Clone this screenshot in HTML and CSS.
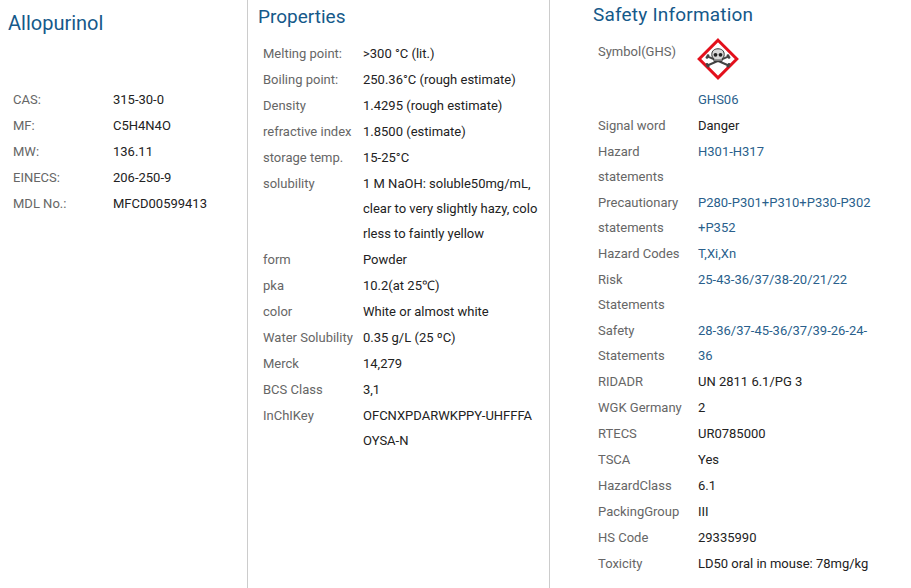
FILE: index.html
```html
<!DOCTYPE html>
<html lang="en">
<head>
<meta charset="utf-8">
<title>Allopurinol</title>
<link rel="stylesheet" href="styles.css">
</head>
<body>
<main class="page">
  <section class="col col-basic">
    <h1 class="title">Allopurinol</h1>
    <dl class="rows">
      <div class="row"><dt>CAS:</dt><dd>315-30-0</dd></div>
      <div class="row"><dt>MF:</dt><dd>C5H4N4O</dd></div>
      <div class="row"><dt>MW:</dt><dd>136.11</dd></div>
      <div class="row"><dt>EINECS:</dt><dd>206-250-9</dd></div>
      <div class="row"><dt>MDL No.:</dt><dd>MFCD00599413</dd></div>
    </dl>
  </section>
  <section class="col col-props">
    <h2 class="title">Properties</h2>
    <dl class="rows">
      <div class="row"><dt>Melting point:</dt><dd>&gt;300 °C (lit.)</dd></div>
      <div class="row"><dt>Boiling point:</dt><dd>250.36°C (rough estimate)</dd></div>
      <div class="row"><dt>Density</dt><dd>1.4295 (rough estimate)</dd></div>
      <div class="row"><dt>refractive index</dt><dd>1.8500 (estimate)</dd></div>
      <div class="row"><dt>storage temp.</dt><dd>15-25°C</dd></div>
      <div class="row"><dt>solubility</dt><dd>1 M NaOH: soluble50mg/mL, clear to very slightly hazy, colorless to faintly yellow</dd></div>
      <div class="row"><dt>form</dt><dd>Powder</dd></div>
      <div class="row"><dt>pka</dt><dd>10.2(at 25℃)</dd></div>
      <div class="row"><dt>color</dt><dd>White or almost white</dd></div>
      <div class="row"><dt>Water Solubility</dt><dd>0.35 g/L (25 ºC)</dd></div>
      <div class="row"><dt>Merck</dt><dd>14,279</dd></div>
      <div class="row"><dt>BCS Class</dt><dd>3,1</dd></div>
      <div class="row"><dt>InChIKey</dt><dd>OFCNXPDARWKPPY-UHFFFAOYSA-N</dd></div>
    </dl>
  </section>
  <section class="col col-safety">
    <h2 class="title">Safety Information</h2>
    <dl class="rows">
      <div class="row"><dt>Symbol(GHS)</dt><dd>
        <svg class="ghs" width="42" height="48" viewBox="0 0 42 48" aria-hidden="true">
          <path d="M21 2.200 L39.800 21 L21 39.800 L2.200 21 Z" fill="#fff" stroke="#e3101c" stroke-width="3" stroke-linejoin="miter"/>
          <path d="M11.500 18.800 L30.500 27 M30.500 18.800 L11.500 27" stroke="#444" stroke-width="2" stroke-linecap="round"/>
          <circle cx="11" cy="17.600" r="1.400" fill="#444"/>
          <circle cx="10" cy="19.400" r="1.400" fill="#444"/>
          <circle cx="31" cy="17.600" r="1.400" fill="#444"/>
          <circle cx="32" cy="19.400" r="1.400" fill="#444"/>
          <circle cx="11" cy="28.200" r="1.400" fill="#444"/>
          <circle cx="10" cy="26.400" r="1.400" fill="#444"/>
          <circle cx="31" cy="28.200" r="1.400" fill="#444"/>
          <circle cx="32" cy="26.400" r="1.400" fill="#444"/>
          <path d="M14.800 16.500 C14.800 12.600 17.500 10.800 21 10.800 C24.500 10.800 27.200 12.600 27.200 16.500 C27.200 18.800 26.200 20 25 20.700 L25 23.400 L17 23.400 L17 20.700 C15.800 20 14.800 18.800 14.800 16.500 Z" fill="#d8d8d8" stroke="#333" stroke-width="1"/>
          <circle cx="18.500" cy="16.800" r="1.900" fill="#222"/>
          <circle cx="23.500" cy="16.800" r="1.900" fill="#222"/>
          <path d="M19 23.200 V21.200 M21 23.200 V21.200 M23 23.200 V21.200" stroke="#222" stroke-width=".9"/>
        </svg>
        <a class="link" href="#">GHS06</a></dd></div>
      <div class="row"><dt>Signal word</dt><dd>Danger</dd></div>
      <div class="row"><dt>Hazard statements</dt><dd><a class="link" href="#">H301-H317</a></dd></div>
      <div class="row"><dt>Precautionary statements</dt><dd><a class="link" href="#">P280-P301+P310+P330-P302+P352</a></dd></div>
      <div class="row"><dt>Hazard Codes</dt><dd><a class="link" href="#">T,Xi,Xn</a></dd></div>
      <div class="row"><dt>Risk Statements</dt><dd><a class="link" href="#">25-43-36/37/38-20/21/22</a></dd></div>
      <div class="row"><dt>Safety Statements</dt><dd><a class="link" href="#">28-36/37-45-36/37/39-26-24-36</a></dd></div>
      <div class="row"><dt>RIDADR</dt><dd>UN 2811 6.1/PG 3</dd></div>
      <div class="row"><dt>WGK Germany</dt><dd>2</dd></div>
      <div class="row"><dt>RTECS</dt><dd>UR0785000</dd></div>
      <div class="row"><dt>TSCA</dt><dd>Yes</dd></div>
      <div class="row"><dt>HazardClass</dt><dd>6.1</dd></div>
      <div class="row"><dt>PackingGroup</dt><dd>III</dd></div>
      <div class="row"><dt>HS Code</dt><dd>29335990</dd></div>
      <div class="row"><dt>Toxicity</dt><dd>LD50 oral in mouse: 78mg/kg</dd></div>
    </dl>
  </section>
</main>
</body>
</html>
```
FILE: styles.css
```css
* { box-sizing: border-box; }
html, body { margin: 0; height: 100%; overflow: hidden; background: #fff; }
body { font: 13px/25px Roboto, "Liberation Sans", sans-serif; color: #222; }
.page { display: flex; height: 588px; }
.col { flex: none; height: 100%; }
.col-basic { width: 248px; padding: 10px 0 0 8px; border-right: 1px solid #ccc; }
.col-props { width: 302px; padding: 4px 0 0 10px; border-right: 1px solid #ccc; }
.col-safety { width: 361px; padding: 2px 0 0 43px; }
.title { margin: 0; font-size: 19px; line-height: 26px; font-weight: 400; color: #15598a; }
.col-basic .title { font-size: 20px; }
.col-safety .title { letter-spacing: .2px; }
.rows { margin: 0; padding-left: 5px; }
.col-basic .rows { margin-top: 51px; }
.col-props .rows { margin-top: 11px; }
.col-safety .rows { margin-top: 11px; }
.row { display: flex; margin-bottom: 1px; }
.row dt { flex: none; width: 100px; padding-right: 8px; color: #666; }
.row dd { flex: none; width: 176px; margin: 0; word-break: break-all; }
.ghs { display: block; margin-left: -1px; margin-top: -1px; margin-bottom: 1px; }
.link { color: #2a5f8c; text-decoration: none; }
```
